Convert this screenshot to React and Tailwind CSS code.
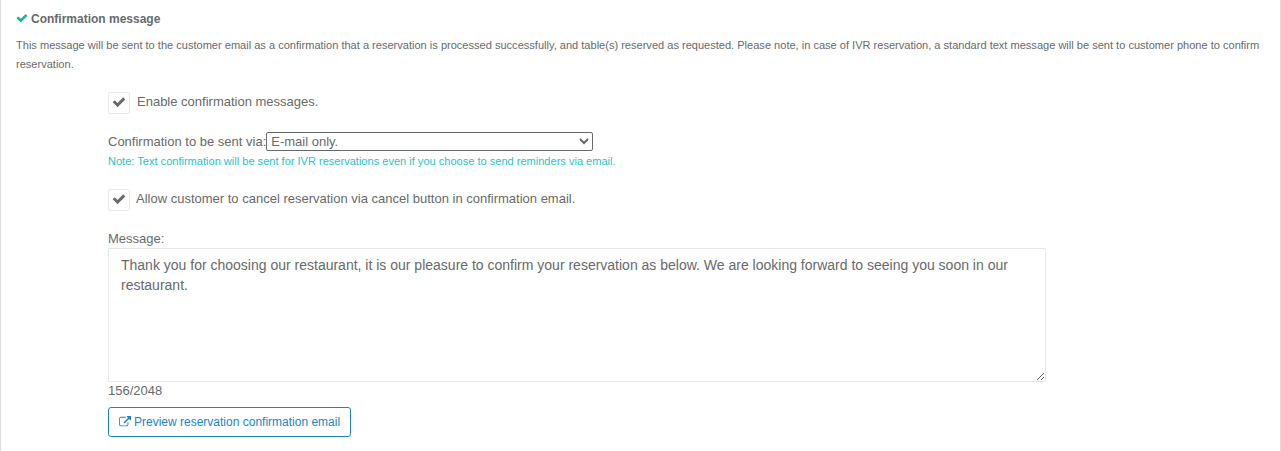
import React, { useState } from "react";

const MAX_LENGTH = 2048;

const CheckIcon = ({ className }) => (
  <svg viewBox="0 0 1792 1792" fill="currentColor" className={className}>
    <path d="M1671 566q0 40-28 68l-724 724-136 136q-28 28-68 28t-68-28l-136-136-362-362q-28-28-28-68t28-68l136-136q28-28 68-28t68 28l294 295 656-657q28-28 68-28t68 28l136 136q28 28 28 68z" />
  </svg>
);

const ExternalLinkIcon = ({ className }) => (
  <svg viewBox="0 0 1792 1792" fill="currentColor" className={className}>
    <path d="M1408 928v320q0 119-84.5 203.5t-203.5 84.5h-832q-119 0-203.5-84.5t-84.5-203.5v-832q0-119 84.5-203.5t203.5-84.5h704q14 0 23 9t9 23v64q0 14-9 23t-23 9h-704q-66 0-113 47t-47 113v832q0 66 47 113t113 47h832q66 0 113-47t47-113v-320q0-14 9-23t23-9h64q14 0 23 9t9 23zm384-864v512q0 26-19 45t-45 19-45-19l-176-176-652 652q-10 10-23 10t-23-10l-114-114q-10-10-10-23t10-23l652-652-176-176q-19-19-19-45t19-45 45-19h512q26 0 45 19t19 45z" />
  </svg>
);

const CheckBox = ({ checked, onChange, label, className }) => (
  <label className={`flex items-start cursor-pointer ${className}`}>
    <input
      type="checkbox"
      className="sr-only"
      checked={checked}
      onChange={(e) => onChange(e.target.checked)}
    />
    <span className="flex h-[22px] w-[22px] shrink-0 items-center justify-center rounded-[2px] border border-[#e7eaec] bg-white pb-[2px]">
      {checked && <CheckIcon className="h-[14px] w-[14px]" />}
    </span>
    <span className="leading-[19px]">{label}</span>
  </label>
);

const App = () => {
  const [enabled, setEnabled] = useState(true);
  const [allowCancel, setAllowCancel] = useState(true);
  const [sendVia, setSendVia] = useState("email");
  const [message, setMessage] = useState(
    "Thank you for choosing our restaurant, it is our pleasure to confirm your reservation as below. We are looking forward to seeing you soon in our restaurant."
  );

  return (
    <section className="h-[451px] overflow-hidden border-x border-[#dddddd] bg-white px-[15px] pt-[10px] font-['Liberation_Sans',Arial,sans-serif] text-[13px] text-[#676a6c]">
      <h5 className="flex items-center text-xs font-bold leading-[19px]">
        <CheckIcon className="mb-[3px] mr-[3px] h-3 w-3 text-[#1ab394]" />
        Confirmation message
      </h5>
      <p className="mt-[7px] text-[11.05px] leading-[19px]">
        This message will be sent to the customer email as a confirmation that a
        reservation is processed successfully, and table(s) reserved as
        requested. Please note, in case of IVR reservation, a standard text
        message will be sent to customer phone to confirm reservation.
      </p>

      <div className="ml-[92px] mt-[18px] w-[938px]">
        <CheckBox
          checked={enabled}
          onChange={setEnabled}
          label="Enable confirmation messages."
          className="gap-[7px]"
        />

        <div className="mt-[18px] flex items-center leading-[19px]">
          <label htmlFor="sendVia">Confirmation to be sent via:</label>
          <select
            id="sendVia"
            value={sendVia}
            onChange={(e) => setSendVia(e.target.value)}
            className="h-[19px] w-[327px] rounded-[2px] border border-[#676a6c] bg-white"
          >
            <option value="email">E-mail only.</option>
            <option value="text">Text message only.</option>
          </select>
        </div>
        <p className="mt-px text-[11.05px] leading-[19px] text-[#23c6c8]">
          Note: Text confirmation will be sent for IVR reservations even if you
          choose to send reminders via email.
        </p>

        <CheckBox
          checked={allowCancel}
          onChange={setAllowCancel}
          label="Allow customer to cancel reservation via cancel button in confirmation email."
          className="mt-[18px] gap-[6px]"
        />

        <label htmlFor="message" className="mt-[18px] block leading-[19px]">
          Message:
        </label>
        <textarea
          id="message"
          maxLength={MAX_LENGTH}
          value={message}
          onChange={(e) => setMessage(e.target.value)}
          className="block h-[134px] w-full rounded-[1px] border border-[#e5e6e7] bg-white px-3 py-1.5 text-sm leading-5 outline-none"
        />
        <div className="leading-[17px]">
          {message.length}/{MAX_LENGTH}
        </div>
        <button
          type="button"
          className="mt-2 flex h-[30px] w-[243px] items-center whitespace-nowrap rounded-[3px] border border-[#1c84c6] pl-[10px] text-xs text-[#1c84c6]"
        >
          <ExternalLinkIcon className="mr-[3px] h-3 w-3" />
          Preview reservation confirmation email
        </button>
      </div>
    </section>
  );
};

export default App;
